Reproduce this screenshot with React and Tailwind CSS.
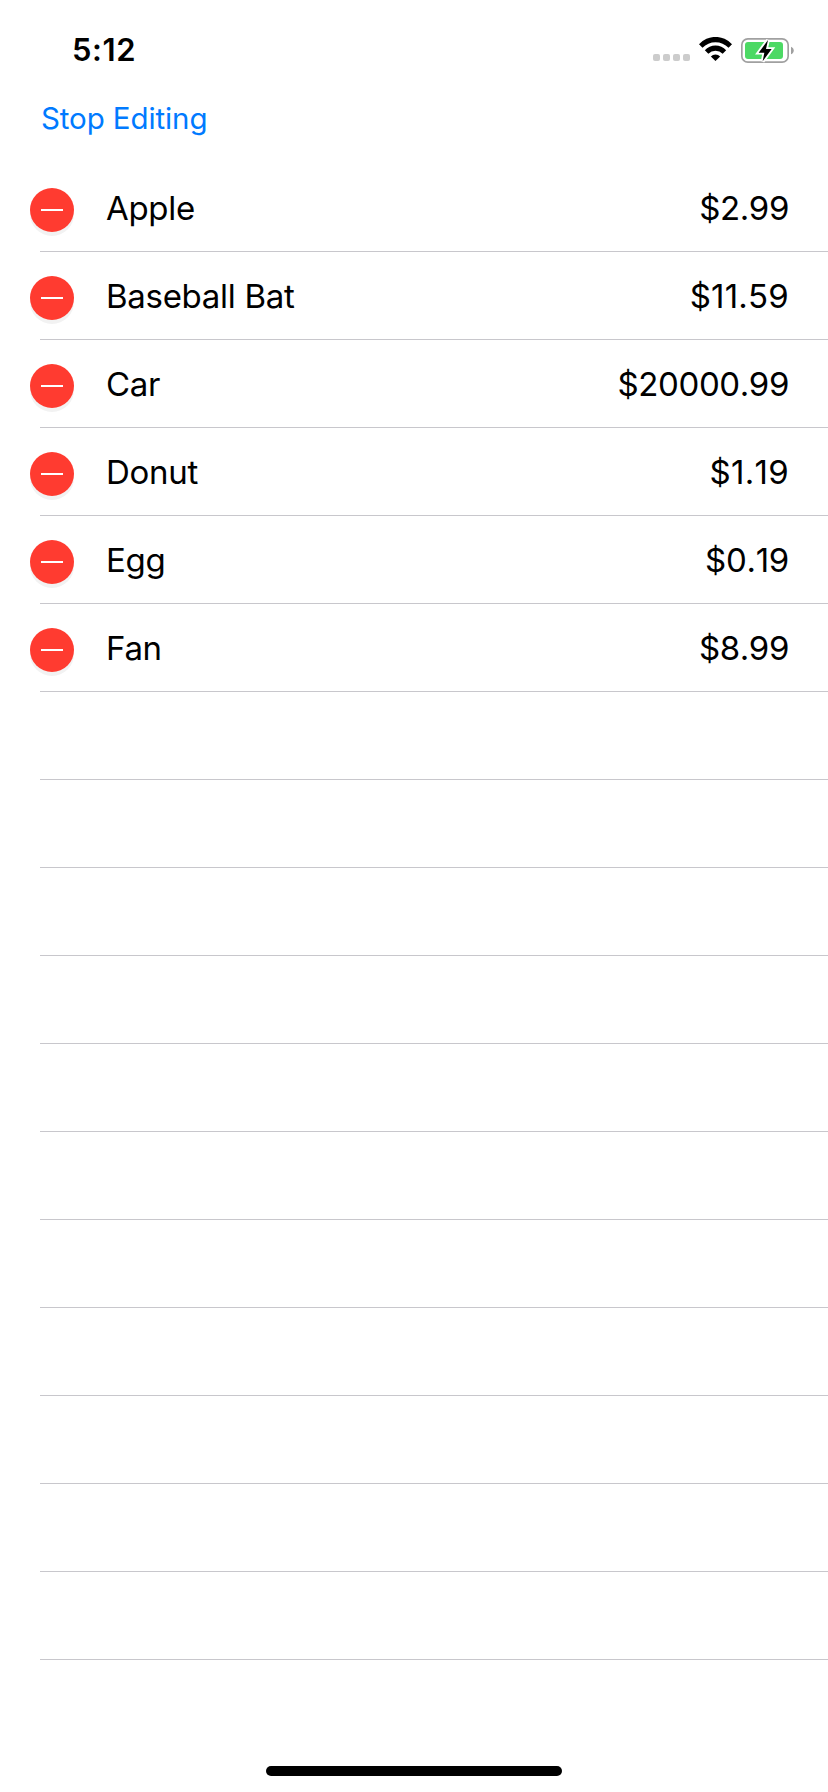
const ITEMS = [
  { name: 'Apple', price: '$2.99', tracking: 'tracking-[-0.4px]' },
  { name: 'Baseball Bat', price: '$11.59', tracking: 'tracking-[0.2px]' },
  { name: 'Car', price: '$20000.99', tracking: 'tracking-[-0.4px]' },
  { name: 'Donut', price: '$1.19', tracking: 'tracking-[0.3px]' },
  { name: 'Egg', price: '$0.19', tracking: 'tracking-[-0.3px]' },
  { name: 'Fan', price: '$8.99', tracking: 'tracking-[-0.4px]' },
];

const EMPTY_ROWS = Array.from({ length: 11 }, (_, i) => i);

function SignalDots() {
  return (
    <div className="flex gap-[3px] pt-[17px]">
      {[0, 1, 2, 3].map((i) => (
        <span key={i} className="size-[7px] rounded-[2px] bg-[#cccccc]" />
      ))}
    </div>
  );
}

function WifiIcon() {
  return (
    <svg className="ml-[9px] h-6 w-[33px]" viewBox="0 0 99 72" fill="#000">
      <path d="M0 22 A66 66 0 0 1 99 22 L88.5 32.5 A54 54 0 0 0 10.5 32.5 Z" />
      <path d="M17.5 40 A43 43 0 0 1 81.5 40 L71 50.5 A30 30 0 0 0 28 50.5 Z" />
      <path d="M35.5 58.5 A19 19 0 0 1 63.5 58.5 L49.5 72 Z" />
    </svg>
  );
}

function BatteryIcon() {
  return (
    <svg className="ml-[9px] h-[27px] w-[53px]" viewBox="0 0 159 81">
      <rect x="2.5" y="5.5" width="139" height="70" rx="18" fill="none" stroke="#a0a0a0" strokeWidth="5" />
      <path d="M150 29 C161 33 161 48 150 52 Z" fill="#a0a0a0" />
      <rect x="12" y="15" width="114" height="51" rx="9" fill="#4cd964" />
      <path d="M81 9 L53 47 L70 47 L65 73 L92 36 L75 36 Z" fill="#000" stroke="#fff" strokeWidth="11" paintOrder="stroke" strokeLinejoin="miter" />
    </svg>
  );
}

function StatusBar() {
  return (
    <header className="flex h-[88px] items-start justify-between pt-[37px] pr-[34px] pl-[72px]">
      <span className="-mt-[6px] text-[31px] leading-[38px] font-semibold tracking-[0.6px]">5:12</span>
      <div className="flex items-start">
        <SignalDots />
        <WifiIcon />
        <BatteryIcon />
      </div>
    </header>
  );
}

function Row({ item }) {
  return (
    <li className="flex h-[88px] border-b border-[#c8c7cc] pr-[5px]">
      {item && (
        <>
          <button
            aria-label={`Delete ${item.name}`}
            className="mt-6 -ml-[10px] flex size-11 shrink-0 items-center justify-center rounded-full bg-[#ff3b30] shadow-[0_4px_0_#f2f2f2]"
          >
            <span className="h-[2px] w-[22px] bg-white" />
          </button>
          <span className="mt-[24px] ml-[32px] flex-1 text-[33px] leading-10 tracking-[-0.3px]">{item.name}</span>
          <span className={`mt-[24px] mr-[34px] text-[33px] leading-10 [font-kerning:none] ${item.tracking}`}>{item.price}</span>
        </>
      )}
    </li>
  );
}

export default function App() {
  return (
    <div className="flex h-[1792px] w-[828px] flex-col overflow-hidden bg-white font-['Inter','Liberation_Sans',sans-serif] text-black">
      <StatusBar />
      <nav className="h-[76px] pt-[12px] pl-[41px]">
        <button className="block text-[29.5px] leading-9 tracking-[-0.1px] text-[#007aff]">Stop Editing</button>
      </nav>
      <ul className="ml-10">
        {ITEMS.map((item) => (
          <Row key={item.name} item={item} />
        ))}
        {EMPTY_ROWS.map((i) => (
          <Row key={i} />
        ))}
      </ul>
      <div className="mt-auto mb-4 h-[10px] w-[296px] self-center rounded-full bg-black" />
    </div>
  );
}
